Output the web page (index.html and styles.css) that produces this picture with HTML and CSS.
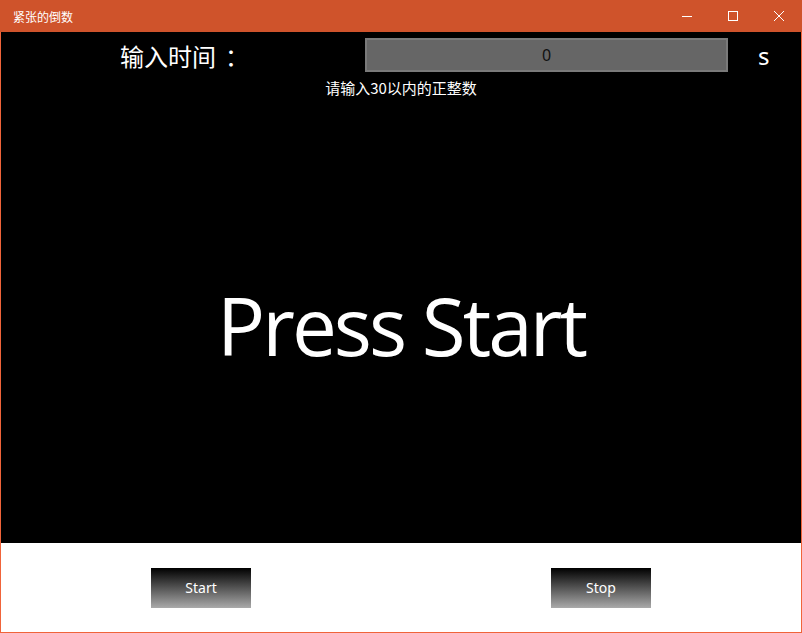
FILE: index.html
```html
<!DOCTYPE html>
<html lang="zh-CN">
<head>
  <meta charset="UTF-8" />
  <title>紧张的倒数</title>
  <link rel="stylesheet" href="styles.css">
</head>
<body>
  <div class="window">
    <div class="titlebar">
      <span class="title">紧张的倒数</span>
      <div class="controls">
        <span class="ctl">
          <svg width="10" height="10" viewBox="0 0 10 10"><path d="M0 5.5h10" stroke="#fff" stroke-width="1"/></svg>
        </span>
        <span class="ctl">
          <svg width="10" height="10" viewBox="0 0 10 10"><rect x="0.5" y="0.5" width="9" height="9" fill="none" stroke="#fff" stroke-width="1"/></svg>
        </span>
        <span class="ctl">
          <svg width="10" height="10" viewBox="0 0 10 10"><path d="M0 0L10 10M10 0L0 10" stroke="#fff" stroke-width="1"/></svg>
        </span>
      </div>
    </div>

    <div class="stage">
      <div class="input-row">
        <span class="label">输入时间<span class="colon">：</span></span>
        <div class="timebox">0</div>
        <span class="unit">s</span>
      </div>
      <div class="hint">请输入30以内的正整数</div>
      <div class="big">Press Start</div>
    </div>

    <div class="buttons">
      <button type="button" class="btn">Start</button>
      <button type="button" class="btn">Stop</button>
    </div>
  </div>
</body>
</html>
```

FILE: styles.css
```css
html, body {
  margin: 0;
  padding: 0;
  background: #fff;
}
body {
  font-family: "Noto Sans", "Noto Sans CJK SC", sans-serif;
}
.window {
  width: 800px;
  height: 632px;
  border: 1px solid #f0643a;
  border-top: none;
  display: flex;
  flex-direction: column;
}
.titlebar {
  height: 32px;
  background: #cf532b;
  color: #fff;
  display: flex;
  align-items: center;
  justify-content: space-between;
  margin: 0 -1px;
  padding-left: 13px;
}
.title {
  font-size: 12px;
  font-family: "Noto Sans CJK SC", sans-serif;
}
.controls {
  display: flex;
  height: 32px;
}
.ctl {
  width: 46px;
  display: flex;
  align-items: center;
  justify-content: center;
}
.stage {
  height: 511px;
  background: #000;
  color: #fff;
  display: flex;
  flex-direction: column;
  align-items: center;
}
.input-row {
  display: flex;
  align-items: center;
  width: 100%;
  height: 34px;
  margin-top: 6px;
}
.label {
  font-family: "Noto Sans CJK SC", sans-serif;
  font-size: 24px;
  margin-left: 119px;
  width: 245px;
}
.colon {
  margin-left: 9px;
}
.timebox {
  width: 359px;
  height: 30px;
  background: #666;
  border: 2px solid #7a7a7a;
  color: #111;
  font-size: 16px;
  display: flex;
  align-items: center;
  justify-content: center;
}
.unit {
  font-size: 24px;
  margin-left: 30px;
}
.hint {
  font-family: "Noto Sans CJK SC", sans-serif;
  font-size: 15px;
  margin-top: 5px;
}
.big {
  font-family: "Open Sans", sans-serif;
  font-size: 80px;
  letter-spacing: -3px;
  margin-top: 187px;
  line-height: 1;
}
.buttons {
  flex: 1;
  display: flex;
  justify-content: space-between;
  align-items: center;
  padding: 0 150px;
  background: #fff;
}
.btn {
  width: 100px;
  height: 40px;
  border: none;
  color: #fff;
  font-family: "Noto Sans", sans-serif;
  font-size: 14px;
  background: linear-gradient(#000, #aaa);
  cursor: pointer;
}
```
